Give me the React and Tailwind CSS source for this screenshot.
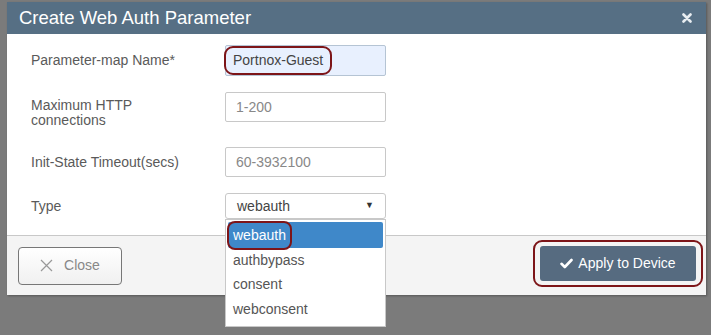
import React from "react";

const options = ["webauth", "authbypass", "consent", "webconsent"];

export default function App() {
  return (
    <div className="w-[711px] h-[335px] bg-[#7b7b7b] pt-[2px] pl-[7px] overflow-hidden font-['Liberation_Sans',Arial,sans-serif]">
      <div className="w-[699px] bg-white shadow-[1px_1px_2px_rgba(0,0,0,0.3)]">
        {/* header */}
        <div className="h-[32px] bg-[#566f84] flex items-center justify-between pl-[12px] pr-[14px]">
          <span className="text-white text-[18.5px]">Create Web Auth Parameter</span>
          <svg width="10" height="10" viewBox="0 0 10 10">
            <path d="M1.5 1.5 L8.5 8.5 M8.5 1.5 L1.5 8.5" stroke="#e8edf1" strokeWidth="2.6" strokeLinecap="round" />
          </svg>
        </div>

        {/* body */}
        <div className="pl-[24px] pt-[11px] pb-[16px] text-[14px] text-[#5a5a5a]">
          <div className="flex items-center h-[31px]">
            <div className="w-[194px]">Parameter-map Name*</div>
            <div className="w-[161px] h-[31px] border border-[#b5c4d4] rounded-[2px] bg-[#e8f0fe] flex items-center">
              <span className="ml-[-2px] h-[29px] px-[7px] flex items-center border-2 border-[#7d1518] rounded-[9px] text-[#444]">
                Portnox-Guest
              </span>
            </div>
          </div>

          <div className="flex items-start h-[30px] mt-[16px]">
            <div className="w-[194px] leading-[15px] pt-[6px]">
              Maximum HTTP
              <br />
              connections
            </div>
            <div className="w-[161px] h-[30px] border border-[#c8c8c8] rounded-[2px] flex items-center px-[10px] text-[#888]">
              1-200
            </div>
          </div>

          <div className="flex items-center h-[30px] mt-[25px]">
            <div className="w-[194px]">Init-State Timeout(secs)</div>
            <div className="w-[161px] h-[30px] border border-[#c8c8c8] rounded-[2px] flex items-center px-[10px] text-[#888]">
              60-3932100
            </div>
          </div>

          <div className="flex items-center h-[26px] mt-[16px]">
            <div className="w-[194px]">Type</div>
            <div className="relative w-[161px]">
              <div className="h-[26px] border border-[#c8c8c8] rounded-[3px] flex items-center justify-between px-[11px] text-[#444]">
                <span>webauth</span>
                <span className="text-[9px] text-[#333]">▼</span>
              </div>
              <div className="absolute left-0 top-[26px] w-[161px] h-[108px] bg-white border border-[#c8c8c8] z-10 pt-[2px] px-[2px]">
                {options.map((o, i) =>
                  i === 0 ? (
                    <div key={o} className="h-[26px] bg-[#3f88c9] rounded-[2px] flex items-center">
                      <span className="h-[29px] ml-[-1px] px-[4px] flex items-center border-2 border-[#7d1518] rounded-[8px] text-white">
                        {o}
                      </span>
                    </div>
                  ) : (
                    <div key={o} className="h-[24.5px] flex items-center pl-[5px] text-[#555]">
                      {o}
                    </div>
                  )
                )}
              </div>
            </div>
          </div>
        </div>

        {/* footer */}
        <div className="h-[60px] border-t border-[#c8c8c8] bg-[#f4f4f4] flex items-center justify-between pl-[11px] pr-[3px]">
          <button className="w-[104px] h-[38px] border border-[#777] rounded-[4px] bg-gradient-to-b from-white to-[#f0f0f0] flex items-center justify-center gap-[11px] text-[14px] text-[#888]">
            <svg width="13" height="13" viewBox="0 0 13 13">
              <path d="M1 1 L12 12 M12 1 L1 12" stroke="#999" strokeWidth="1.2" />
            </svg>
            Close
          </button>
          <div className="px-[5px] py-[4px] border-2 border-[#7d1518] rounded-[9px] mt-[-4px]">
            <button className="w-[156px] h-[35px] bg-[#566b80] rounded-[3px] flex items-center justify-center gap-[5px] text-[14px] text-white">
              <svg width="13" height="11" viewBox="0 0 13 11">
                <path d="M1.5 5.8 L4.8 9 L11.5 2" stroke="white" strokeWidth="2.6" fill="none" strokeLinecap="round" strokeLinejoin="round" />
              </svg>
              Apply to Device
            </button>
          </div>
        </div>
      </div>
    </div>
  );
}
